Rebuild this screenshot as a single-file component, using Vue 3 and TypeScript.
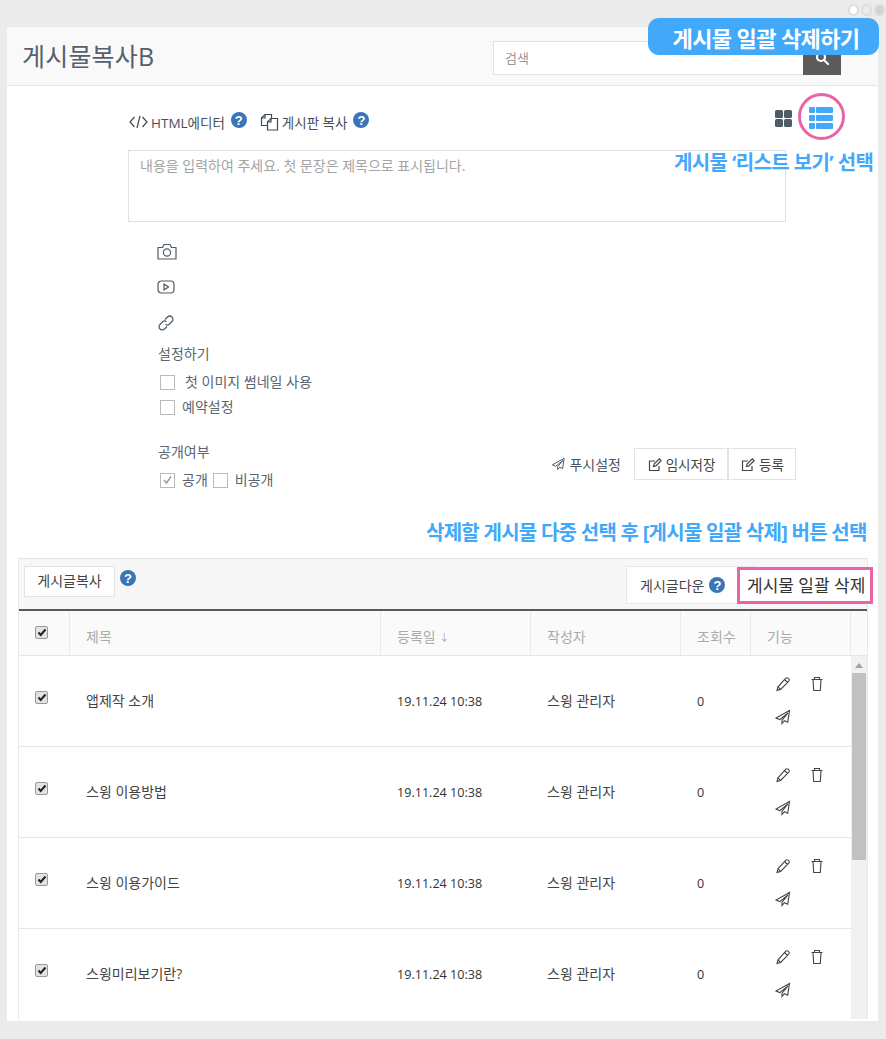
<script setup lang="ts">
interface Post { title: string; date: string; author: string; views: number }
const posts: Post[] = [
  { title: '앱제작 소개', date: '19.11.24 10:38', author: '스윙 관리자', views: 0 },
  { title: '스윙 이용방법', date: '19.11.24 10:38', author: '스윙 관리자', views: 0 },
  { title: '스윙 이용가이드', date: '19.11.24 10:38', author: '스윙 관리자', views: 0 },
  { title: '스윙미리보기란?', date: '19.11.24 10:38', author: '스윙 관리자', views: 0 },
]
const plane = 'M14.5 1.5 1 9l3.800 1.600L13 4 7 11.200V14.500l2.400-2.800 3.300 1.500z'
const pencil = 'M10.800 2.200a1.600 1.600 0 0 1 2.300 0l.7.7a1.600 1.600 0 0 1 0 2.300L5.600 13.400 2 14.500l1-3.700zM9.500 3.500l3 3M3 10.800l2.600 2.600'
const trash = 'M1.500 3.500h11M4.500 3.500V1.500h5v2M3 3.500l.7 11h6.600l.7-11'
const edit = 'M12 9v4.500H2.500V4H8M6.500 9.500l.6-2.400 5.200-5.200 1.800 1.800-5.200 5.200z'
</script>

<template>
  <div class="page">
    <div class="dots"><i class="d1"></i><i class="d2"></i><i class="d3"></i></div>

    <main class="panel">
      <header class="head">
        <h1>게시물복사B</h1>
        <div class="search">
          <input type="text" placeholder="검색" />
          <button type="button" aria-label="검색">
            <svg width="14" height="14" viewBox="0 0 14 14" fill="none" stroke="#fff" stroke-width="2.200"><circle cx="6" cy="6" r="4"/><path d="m9 9 4 4" stroke-linecap="round"/></svg>
          </button>
        </div>
      </header>

      <section class="tools">
        <svg class="code" width="19" height="14" viewBox="0 0 19 14" fill="none" stroke="#3f4952" stroke-width="1.200"><path d="M5.500 2 1 7l4.500 5M13.500 2 18 7l-4.500 5M11 1 8 13"/></svg>
        <span class="tool-label">HTML에디터</span>
        <span class="help h1">?</span>
        <svg class="copy" width="19" height="18" viewBox="0 0 19 18" fill="none" stroke="#3f4952" stroke-width="1.200"><path d="M7 12.500H1.500V5L5 1.500h6.500V5"/><path d="M5 1.500V5H1.500"/><path d="M7.500 9 11 5.500h6.500V17h-10z"/><path d="M11 5.500V9H7.500"/></svg>
        <span class="tool-label">게시판 복사</span>
        <span class="help h2">?</span>
        <div class="views">
          <svg width="17" height="17" viewBox="0 0 17 17" fill="#4f5b67"><rect width="8" height="8" rx="1.500"/><rect x="9" width="8" height="8" rx="1.500"/><rect y="9" width="8" height="8" rx="1.500"/><rect x="9" y="9" width="8" height="8" rx="1.500"/></svg>
          <svg width="24" height="22" viewBox="0 0 24 22" fill="#42a8fa"><rect width="6" height="6" rx="1"/><rect x="7" width="17" height="6" rx="1"/><rect y="8" width="6" height="6" rx="1"/><rect x="7" y="8" width="17" height="6" rx="1"/><rect y="16" width="6" height="6" rx="1"/><rect x="7" y="16" width="17" height="6" rx="1"/></svg>
        </div>
      </section>

      <textarea class="editor" placeholder="내용을 입력하여 주세요. 첫 문장은 제목으로 표시됩니다."></textarea>

      <div class="attach">
        <svg width="20" height="17" viewBox="0 0 20 17" fill="none" stroke="#4f5b67" stroke-width="1.200"><path d="M1 4.500h4.500L7 1.500h6l1.500 3H19v11.500H1z" stroke-linejoin="round"/><circle cx="10" cy="9.500" r="3.600"/></svg>
        <svg width="18" height="14" viewBox="0 0 18 14" fill="none" stroke="#4f5b67" stroke-width="1.200"><rect x="1" y="1" width="16" height="12" rx="3.500"/><path d="M7 4.200v5.600l4.500-2.800z"/></svg>
        <svg width="18" height="18" viewBox="0 0 18 18" fill="none" stroke="#4f5b67" stroke-width="1.200"><path d="M8 5.500 10.500 3a3 3 0 0 1 4.500 4.500L12.500 10a3 3 0 0 1-4 .3"/><path d="M10 12.500 7.500 15A3 3 0 0 1 3 10.500L5.500 8a3 3 0 0 1 4-.3"/></svg>
      </div>

      <div class="form-foot">
        <div class="settings">
          <div class="set-title">설정하기</div>
          <label class="opt first"><span class="box"></span><span class="t lead">첫 이미지 썸네일 사용</span></label>
          <label class="opt second"><span class="box"></span><span class="t">예약설정</span></label>
          <div class="set-title open">공개여부</div>
          <div class="opt">
            <span class="box"><svg width="11" height="10" viewBox="0 0 11 10" fill="none" stroke="#999" stroke-width="1.400"><path d="m2 5 2.500 3L9 1.500"/></svg></span>
            <span class="t">공개</span>
            <span class="box nth"></span>
            <span class="t">비공개</span>
          </div>
        </div>
        <div class="actions">
          <span class="push">
            <svg width="15" height="14" viewBox="0 0 16 16" fill="none" stroke="#4a5560" stroke-width="1.100"><path :d="plane"/></svg>
            푸시설정
          </span>
          <button type="button" class="btn"><svg width="15" height="15" viewBox="0 0 15 15" fill="none" stroke="#444" stroke-width="1.200"><path :d="edit"/></svg>임시저장</button>
          <button type="button" class="btn joined"><svg width="15" height="15" viewBox="0 0 15 15" fill="none" stroke="#444" stroke-width="1.200"><path :d="edit"/></svg>등록</button>
        </div>
      </div>

      <section class="board">
        <div class="board-bar">
          <button type="button" class="btn small">게시글복사</button>
          <span class="help h3">?</span>
          <div class="down">게시글다운 <span class="help h4">?</span></div>
          <button type="button" class="bulk">게시물 일괄 삭제</button>
        </div>
        <div class="row thead">
          <div class="c-check"><span class="cb"><svg width="10" height="9" viewBox="0 0 10 9" fill="none" stroke="#222" stroke-width="2"><path d="m1.500 4.500 2.200 2.500L8.500 1.500"/></svg></span></div>
          <div class="th">제목</div>
          <div class="th">등록일&nbsp;<small>↓</small></div>
          <div class="th">작성자</div>
          <div class="th">조회수</div>
          <div class="th">기능</div>
          <div class="th last"></div>
        </div>
        <div class="tbody">
          <div class="rows">
            <div v-for="post in posts" :key="post.title" class="row item">
              <div class="c-check"><span class="cb"><svg width="10" height="9" viewBox="0 0 10 9" fill="none" stroke="#222" stroke-width="2"><path d="m1.500 4.500 2.200 2.500L8.500 1.500"/></svg></span></div>
              <div class="td">{{ post.title }}</div>
              <div class="td date">{{ post.date }}</div>
              <div class="td">{{ post.author }}</div>
              <div class="td date">{{ post.views }}</div>
              <div class="func">
                <svg width="16" height="16" viewBox="0 0 16 16" fill="none" stroke="#444" stroke-width="1.100"><path :d="pencil"/></svg>
                <svg width="14" height="16" viewBox="0 0 14 16" fill="none" stroke="#444" stroke-width="1.100"><path :d="trash"/></svg>
                <svg width="16" height="16" viewBox="0 0 16 16" fill="none" stroke="#444" stroke-width="1.100"><path :d="plane"/></svg>
              </div>
            </div>
          </div>
          <div class="scrollbar"><span class="arrow"></span><span class="thumb"></span></div>
        </div>
      </section>
    </main>

    <div class="callout-main">게시물 일괄 삭제하기</div>
    <div class="ring"></div>
    <div class="note note-list">게시물 ‘리스트 보기’ 선택</div>
    <div class="note note-bulk">삭제할 게시물 다중 선택 후 [게시물 일괄 삭제] 버튼 선택</div>
  </div>
</template>

<style>
html, body { margin: 0; background: #ebebeb; }
</style>

<style scoped>
* { box-sizing: border-box; }
.page {
  position: relative;
  width: 886px;
  height: 1039px;
  padding: 27px 8px 18px 7px;
  overflow: hidden;
  background: #ebebeb;
  font-family: "Open Sans", "Noto Sans CJK KR", sans-serif;
  font-size: 14px;
  color: #444;
}
.panel { height: 994px; background: #fff; overflow: hidden; }

.dots { position: absolute; top: 4px; right: 1px; display: flex; gap: 2px; }
.dots i { width: 11px; height: 12px; border-radius: 50%; border: 2px solid #dcdcd8; }
.dots .d1 { background: #fff; }
.dots .d2 { background: #ececec; }
.dots .d3 { background: #d4d4cc; }

.head {
  height: 59px;
  display: flex;
  align-items: center;
  justify-content: space-between;
  padding: 4px 37px 0 15px;
  background: #f9f9f9;
  border-bottom: 1px solid #e6e6e6;
}
.head h1 { margin: 0 0 7px; font-size: 25px; font-weight: 400; color: #55606b; letter-spacing: 0.2px; }
.search { display: flex; height: 34px; }
.search input {
  width: 310px;
  height: 34px;
  padding: 0 11px;
  border: 1px solid #e2e2e2;
  border-right: 0;
  background: #fff;
  font: inherit;
  font-size: 13px;
  outline: 0;
}
.search input::placeholder { color: #999; }
.search button { width: 38px; border: 0; padding: 0; background: #5b5b5b; display: flex; align-items: center; justify-content: center; }

.tools { display: flex; align-items: center; height: 24px; margin-top: 24px; padding: 0 45px 0 122px; }
.tool-label { margin-left: 3px; color: #454f59; font-size: 13.500px; }
.help {
  display: inline-flex;
  align-items: center;
  justify-content: center;
  width: 16px;
  height: 16px;
  border-radius: 50%;
  background: #3a76b5;
  color: #fff;
  font-family: "Liberation Sans", sans-serif;
  font-size: 13px;
  font-weight: 700;
  line-height: 1;
}
.h1 { margin: -4px 0 0 6px; }
.h2 { margin: -4px 0 0 6px; }
.copy { margin-left: 13px; }
.views { margin-left: auto; margin-top: -8px; display: flex; align-items: center; gap: 17px; }

.editor {
  display: block;
  width: 658px;
  height: 72px;
  margin: 16px 0 0 121px;
  padding: 4px 11px;
  border: 1px solid #dde3e3;
  border-radius: 0;
  resize: none;
  outline: 0;
  font: inherit;
  font-size: 14px;
}
.editor::placeholder { color: #a4a4a4; }

.attach { display: grid; grid-auto-rows: 36px; align-items: center; justify-items: start; margin: 11px 0 0 150px; }

.form-foot { display: flex; justify-content: space-between; align-items: flex-end; padding: 0 82px 0 151px; margin-top: 4px; }
.settings { color: #5a6570; }
.set-title { height: 20px; line-height: 18px; }
.opt { display: flex; align-items: center; height: 20px; }
.opt .t { margin-top: -2px; }
.opt.first { margin-top: 7px; }
.opt.second { margin-top: 5px; }
.set-title.open { margin-top: 26px; margin-bottom: 7px; }
.box {
  display: inline-flex;
  align-items: center;
  justify-content: center;
  width: 15px;
  height: 15px;
  margin: 0 7px 0 2px;
  border: 1px solid #bbb;
  background: #fff;
}
.box.nth { margin-left: 5px; margin-right: 7px; }
.lead { margin-left: 3px; }

.actions { display: flex; align-items: center; margin-bottom: 10px; }
.push { display: inline-flex; align-items: center; gap: 3px; margin-right: 13px; color: #4a5560; }
.btn {
  display: inline-flex;
  align-items: center;
  justify-content: center;
  gap: 4px;
  width: 94px;
  height: 32px;
  padding: 0;
  border: 1px solid #e3e3e3;
  background: #fff;
  font: inherit;
  font-size: 13.500px;
  color: #444;
}
.btn.joined { width: 68px; margin-left: 0; }

.board { position: relative; margin: 68px 10px 0 11px; border: 1px solid #e8e8e8; border-bottom: 0; border-top-color: #e4e4e4; }
.board-bar {
  position: relative;
  height: 52px;
  background: #f7f7f7;
  border-bottom: 2px solid #585858;
}
.btn.small { position: absolute; left: 5px; top: 7px; width: 91px; height: 31px; padding-bottom: 3px; font-size: 14px; }
.h3 { position: absolute; left: 101px; top: 11px; }
.down {
  position: absolute;
  left: 607px;
  top: 7px;
  width: 130px;
  height: 38px;
  display: flex;
  align-items: center;
  padding-left: 13px;
  gap: 5px;
  background: #fff;
  border: 1px solid #e8e8e8;
}
.bulk {
  position: absolute;
  left: 718px;
  top: 8px;
  width: 136px;
  height: 37px;
  padding: 0 0 2px 7px;
  text-align: left;
  border: 3px solid #e964a4;
  background: #fff;
  font: inherit;
  font-size: 17px;
  color: #333;
  white-space: nowrap;
}

.row { display: grid; grid-template-columns: 51px 311px 150px 150px 70px 100px 16px; }
.thead { height: 45px; background: #fafafa; border-bottom: 1px solid #e6e6e6; color: #aaa; font-size: 14px; }
.thead small { font-size: 10px; }
.thead .c-check { border-right: 1px solid #e9e9e9; align-items: flex-start; padding-top: 15px; }
.th { display: flex; align-items: center; padding: 6px 0 0 16px; border-right: 1px solid #e9e9e9; }
.th.last { border-right: 0; }
.c-check { display: flex; justify-content: flex-start; padding-left: 16px; }
.cb {
  display: inline-flex;
  align-items: center;
  justify-content: center;
  width: 13px;
  height: 13px;
  border: 1px solid #999;
  border-radius: 2px;
  background: #e2e2e2;
}

.tbody { display: flex; height: 363px; overflow: hidden; }
.rows { width: 832px; flex: none; }
.item { grid-template-columns: 51px 311px 150px 150px 70px 100px; height: 91px; border-bottom: 1px solid #e6e6e6; }
.item .c-check { padding-top: 35px; }
.td { display: flex; align-items: center; padding: 0 0 2px 16px; color: #444; }
.td.date { padding-bottom: 0; font-size: 12.600px; color: #333; }
.func { display: grid; grid-template-columns: 35px 20px; grid-auto-rows: 16px; row-gap: 17px; padding: 20px 0 0 24px; align-content: start; }

.scrollbar { position: relative; width: 16px; flex: none; background: #f1f1f1; }
.arrow {
  position: absolute;
  left: 4px;
  top: 7px;
  border: 4px solid transparent;
  border-top: 0;
  border-bottom: 5px solid #a3a3a3;
}
.thumb { position: absolute; left: 1px; top: 17px; width: 14px; height: 187px; background: #c1c1c1; }

.callout-main {
  position: absolute;
  left: 648px;
  top: 18px;
  width: 231px;
  height: 37px;
  display: flex;
  align-items: center;
  justify-content: center;
  padding-left: 5px;
  border-radius: 11px;
  background: #42a8fa;
  color: #fff;
  font-size: 22px;
  font-weight: 700;
  letter-spacing: -0.600px;
}
.ring { position: absolute; left: 798px; top: 93px; width: 47px; height: 47px; border: 3px solid #e964a4; border-radius: 50%; }
.note { position: absolute; color: #42a8fa; font-size: 20px; font-weight: 700; white-space: nowrap; letter-spacing: -0.600px; line-height: 24px; }
.note-list { left: 674px; top: 151px; }
.note-bulk { left: 426px; top: 521px; letter-spacing: -0.730px; }
</style>
